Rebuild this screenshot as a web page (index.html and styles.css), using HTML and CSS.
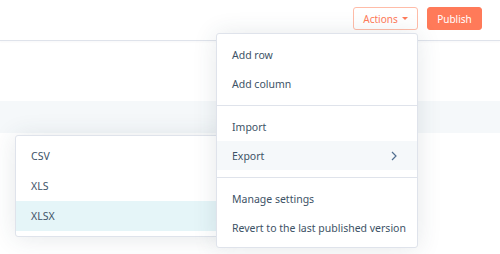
FILE: index.html
```html
<!DOCTYPE html>
<html>
<head>
<meta charset="utf-8">
<link rel="stylesheet" href="styles.css">
</head>
<body>
<header class="topbar">
  <button class="btn btn-outline">Actions <span class="caret"></span></button>
  <button class="btn btn-primary">Publish</button>
</header>
<main class="content">
  <div class="spacer"></div>
  <div class="band"></div>
</main>

<div class="menu submenu">
  <div class="item">CSV</div>
  <div class="item">XLS</div>
  <div class="item active">XLSX</div>
</div>

<div class="menu mainmenu">
  <div class="section">
    <div class="item">Add row</div>
    <div class="item">Add column</div>
  </div>
  <div class="section">
    <div class="item">Import</div>
    <div class="item hover">Export
      <svg class="chev" width="6" height="10" viewBox="0 0 6 10"><polyline points="1,1 5,5 1,9" fill="none" stroke="#516f90" stroke-width="1.2"/></svg>
    </div>
  </div>
  <div class="section">
    <div class="item">Manage settings</div>
    <div class="item">Revert to the last published version</div>
  </div>
</div>
</body>
</html>
```

FILE: styles.css
```css
* { box-sizing: border-box; }
html, body { margin: 0; padding: 0; background: #fff; }
body {
  font-family: "Noto Sans", "Lato", sans-serif;
  font-size: 10.5px;
  color: #3d5266;
  width: 500px;
  height: 254px;
  overflow: hidden;
  position: relative;
}
.topbar {
  height: 41px;
  border-bottom: 1px solid #dfe3eb;
  display: flex;
  justify-content: flex-end;
  align-items: flex-start;
  padding: 7px 18px 0 0;
  gap: 9px;
  box-shadow: 0 1px 2px rgba(45, 62, 80, 0.04);
}
.btn {
  height: 23px;
  border-radius: 3px;
  font-family: inherit;
  font-size: 10px;
  padding: 0;
  display: flex;
  align-items: center;
  justify-content: center;
  cursor: pointer;
}
.btn-outline {
  width: 65px;
  background: #fff;
  border: 1px solid #ffbca8;
  color: #ff7a59;
  gap: 4px;
}
.caret {
  width: 0; height: 0;
  border-left: 3px solid transparent;
  border-right: 3px solid transparent;
  border-top: 3px solid #ff7a59;
}
.btn-primary {
  width: 55px;
  background: #ff7a59;
  border: 1px solid #ff7a59;
  color: #fff;
}
.spacer { height: 60px; }
.band { height: 32px; background: #f5f8fa; }

.menu {
  position: absolute;
  background: #fff;
  border: 1px solid #dfe3eb;
  border-radius: 3px;
  box-shadow: 0 1px 24px rgba(45, 62, 80, 0.12);
}
.mainmenu {
  left: 216px;
  top: 33px;
  width: 202px;
  height: 215px;
}
.section {
  padding: 6px 0 7px;
  border-top: 1px solid #dfe3eb;
}
.section:first-child { border-top: 0; }
.item {
  height: 29px;
  display: flex;
  align-items: center;
  justify-content: space-between;
  padding: 0 20px 0 15px;
  white-space: nowrap;
}
.hover { background: #f5f8fa; }
.chev { display: block; }
.submenu {
  left: 15px;
  top: 135px;
  width: 210px;
  height: 102px;
  padding-top: 5px;
}
.submenu .item { height: 30px; padding-left: 15px; }
.active { background: #e5f5f8; }
```
